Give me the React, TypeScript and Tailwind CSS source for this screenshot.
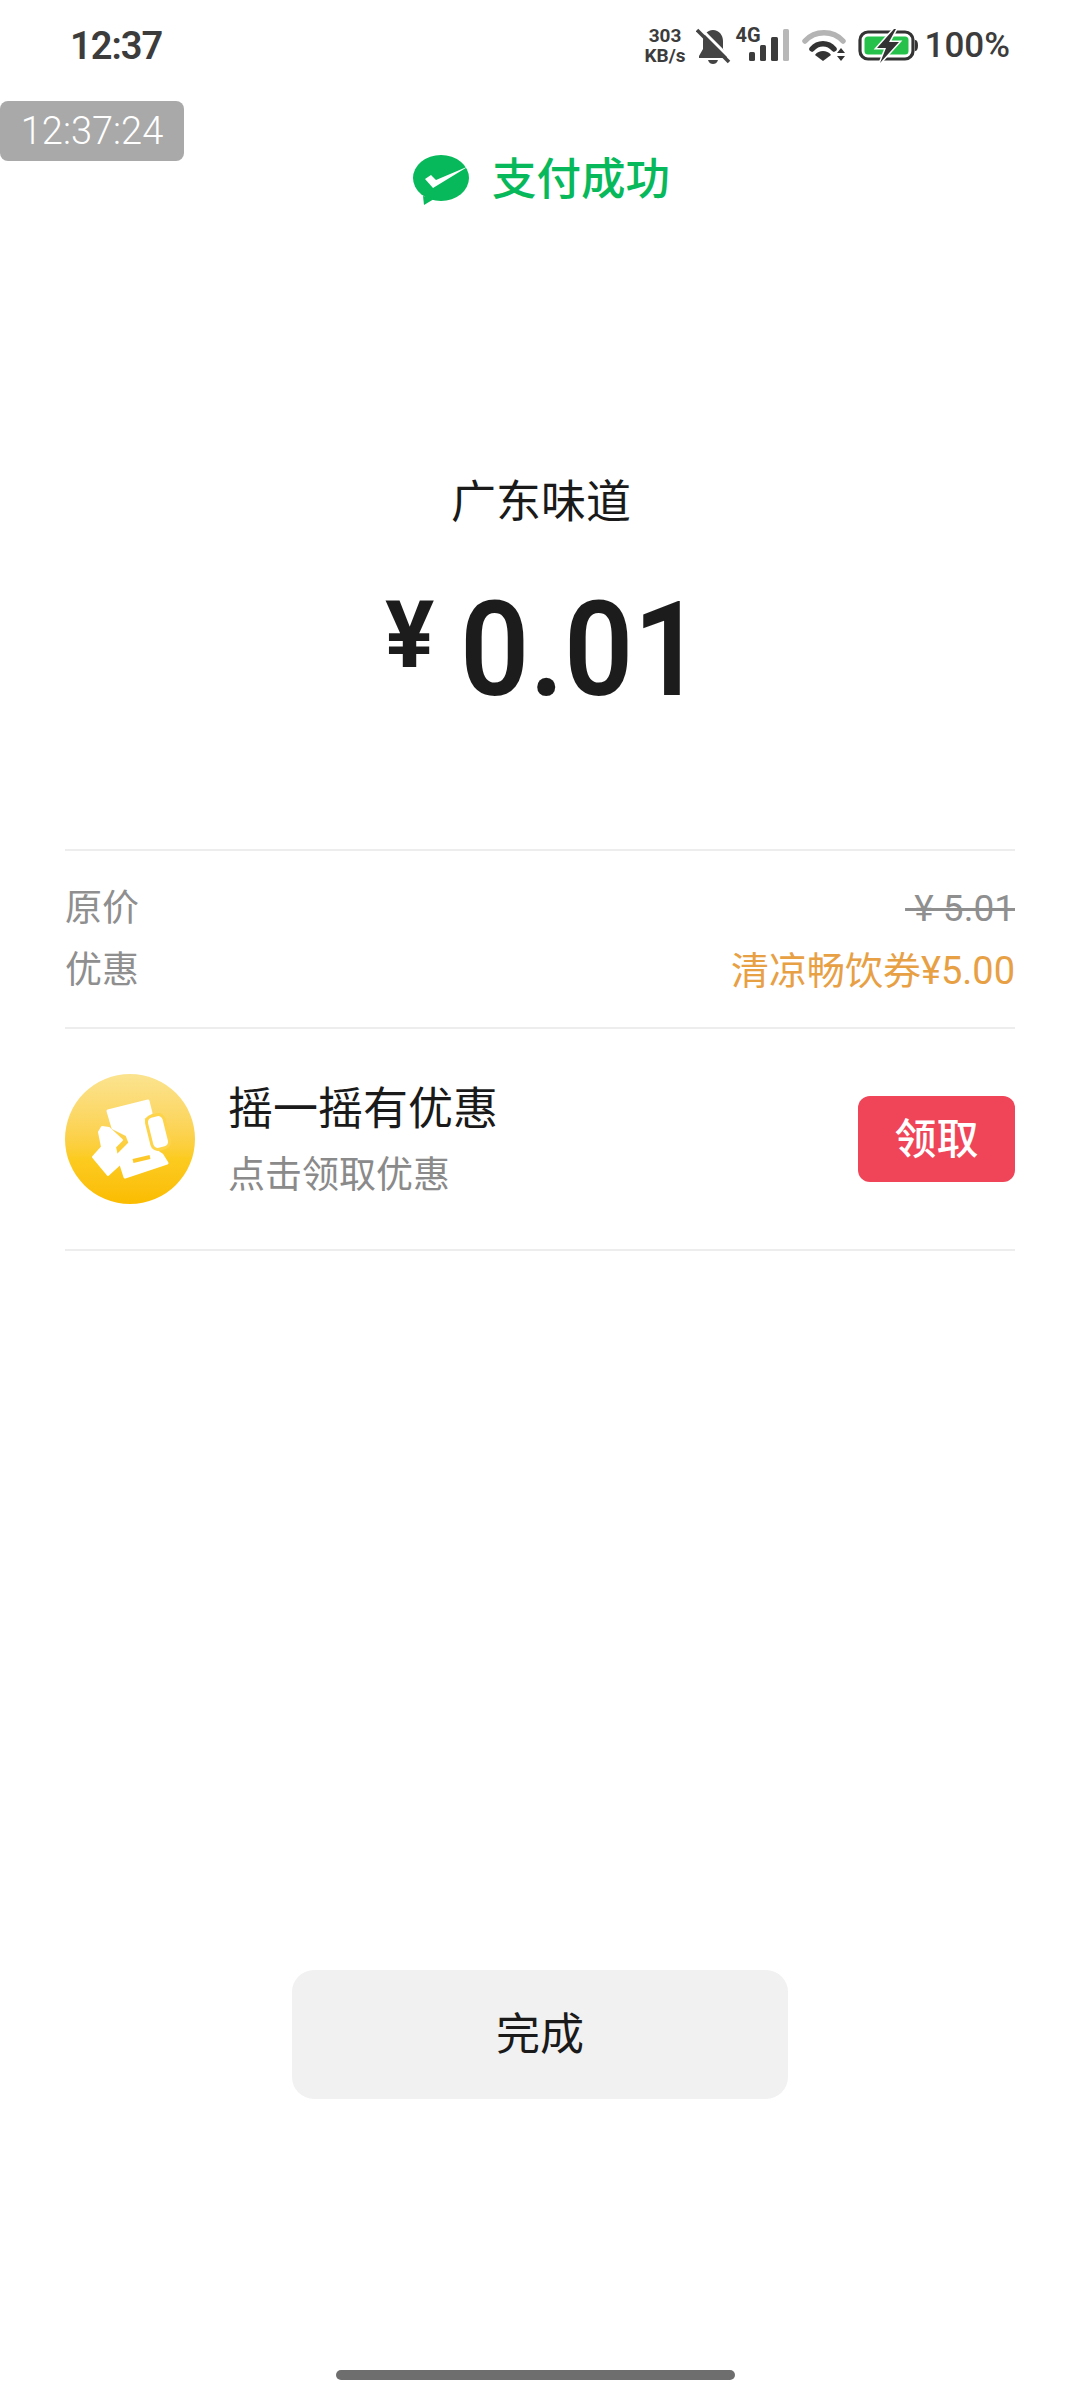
const fontStack = { fontFamily: '"Roboto", "Noto Sans CJK SC", sans-serif' };

const BellOff = () => (
    <svg width="35" height="38" viewBox="0 0 35 38" className="ml-[10px]">
        <path d="M17 3c6 0 10 5 10 11v8l4 7v2H3v-2l4-7v-8C7 8 11 3 17 3z" fill="#444" />
        <path d="M12 33h10c-1 3-3 4-5 4s-4-1-5-4z" fill="#444" />
        <line x1="3" y1="0" x2="36" y2="33" stroke="#fff" strokeWidth="3" />
        <line x1="1" y1="3" x2="33" y2="35" stroke="#444" strokeWidth="3.5" />
    </svg>
);

const Signal = () => (
    <div className="relative ml-[3px] w-[56px] h-[36px]">
        <span className="absolute left-[2px] top-[-3px] text-[20px] leading-[20px] font-bold text-[#3c3c3c]">4G</span>
        <svg width="41" height="33" viewBox="0 0 41 33" className="absolute left-[15px] top-[1px]">
            <rect x="0" y="23" width="6" height="9" rx="1.5" fill="#3c3c3c" />
            <rect x="11" y="16" width="6" height="16" rx="1.5" fill="#3c3c3c" />
            <rect x="22" y="8" width="7" height="24" rx="1.5" fill="#3c3c3c" />
            <rect x="34" y="0" width="6" height="32" rx="1.5" fill="#b8b8b8" />
        </svg>
    </div>
);

const Wifi = () => (
    <svg width="44" height="32" viewBox="0 0 44 32" className="ml-[12px]">
        <path d="M3 11C13 0 31 0 41 11" fill="none" stroke="#b4b4b4" strokeWidth="5.5" strokeLinecap="round" />
        <path d="M10 19C16 12 26 12 32 19" fill="none" stroke="#333" strokeWidth="5.5" strokeLinecap="round" />
        <path d="M21 21c3 0 6 1 8 4l-8 6-8-6c2-3 5-4 8-4z" fill="#333" />
        <path d="M35 23l4-5 4 5zM35 26l4 5 4-5z" fill="#333" />
    </svg>
);

const Battery = () => (
    <svg width="60" height="34" viewBox="0 0 60 34" className="ml-[12px]">
        <rect x="2" y="3" width="53" height="27" rx="8" fill="none" stroke="#333" strokeWidth="3.2" />
        <path d="M57 11c2 0 3 2 3 5.500s-1 5.500-3 5.500z" fill="#333" />
        <rect x="6.500" y="7.500" width="44" height="18" rx="3.500" fill="#25c14b" />
        <path
            d="M36 0L19 19h9l-6 15 19-21h-10l7-13z"
            fill="#333"
            stroke="#fff"
            strokeWidth="3"
            paintOrder="stroke"
        />
    </svg>
);

const WechatMark = () => (
    <svg width="56" height="50" viewBox="0 0 56 50">
        <ellipse cx="28" cy="23" rx="28" ry="23" fill="#07b95a" />
        <path d="M10 41l1 9 10-6z" fill="#07b95a" />
        <path d="M12 24l6-4 5 5 33-14-36 22z" fill="#fff" />
    </svg>
);

const CouponMark = () => (
    <div className="w-[130px] h-[130px] rounded-full bg-gradient-to-b from-[#fbe38f] via-[#fccb1f] via-65% to-[#fbbc00] flex items-center justify-center shrink-0">
        <svg width="130" height="130" viewBox="0 0 130 130">
            <path
                d="M43 37L83 27L86 39L78 44L85 73L97 81L102 89L60 103L53 81L65 69L62 61L48 54z"
                fill="#fff"
                stroke="#fff"
                strokeWidth="3"
                strokeLinejoin="round"
            />
            <path
                d="M37 53L44 54L57 66L50 73L54 91L43 101L28 83L37 73L34 58z"
                fill="#fff"
                stroke="#fff"
                strokeWidth="2"
                strokeLinejoin="round"
            />
            <rect
                x="84"
                y="41"
                width="18"
                height="34"
                rx="6"
                fill="#fff"
                stroke="#fdd44a"
                strokeWidth="3"
                transform="rotate(-14 93 58)"
            />
            <line x1="68" y1="87" x2="85" y2="83" stroke="#fdc92a" strokeWidth="4" />
        </svg>
    </div>
);

const App = () => {
    return (
        <div className="w-[1080px] h-[2400px] bg-white flex flex-col relative" style={fontStack}>
            <div className="h-[92px] flex items-center justify-between pl-[70px] pr-[70px] text-[#3c3c3c]">
                <span className="text-[38px] leading-[46px] font-semibold tracking-[-1px]">12:37</span>
                <div className="flex items-center">
                    <div className="flex flex-col items-center text-[19px] leading-[20px] font-bold">
                        <span>303</span>
                        <span>KB/s</span>
                    </div>
                    <BellOff />
                    <Signal />
                    <Wifi />
                    <Battery />
                    <span className="ml-[7px] text-[35px] leading-[40px] font-medium">100%</span>
                </div>
            </div>

            <div className="absolute left-0 top-[101px] w-[184px] h-[60px] bg-[#a9a9a9] rounded-[8px] flex items-center justify-center text-white text-[38px] font-light">
                12:37:24
            </div>

            <div className="mt-[62px] ml-[413px] flex items-center gap-[23px]">
                <WechatMark />
                <span className="text-[44.5px] leading-[52px] font-medium text-[#07b95a]">支付成功</span>
            </div>

            <div className="mt-[269px] text-center pl-[2px] text-[45px] leading-[56px] text-[#1a1a1a]">广东味道</div>

            <div className="mt-[51px] ml-[385px] flex items-start text-[#1c1c1c] h-[136px]">
                <span className="text-[92px] leading-[100px] font-bold mt-[4px]">¥</span>
                <span className="ml-[26px] text-[132px] leading-[136px] font-semibold scale-x-[0.92] origin-left">0.01</span>
            </div>

            <div className="mt-[131px] mx-[65px] border-t-2 border-[#ededed]">
                <div className="pt-[35px] pb-[33px] flex flex-col gap-[16px] text-[37px] leading-[46px] text-[#8f8f8f]">
                    <div className="flex justify-between">
                        <span>原价</span>
                        <span className="line-through">&nbsp;¥ 5.01</span>
                    </div>
                    <div className="flex justify-between">
                        <span>优惠</span>
                        <span className="text-[38px] text-[#e8a045]">清凉畅饮券¥5.00</span>
                    </div>
                </div>
                <div className="border-t-2 border-[#ededed] border-b-2 h-[224px] flex items-center">
                    <CouponMark />
                    <div className="ml-[33px] pt-[3px] flex flex-col gap-[15px]">
                        <span className="text-[45px] leading-[56px] text-[#1a1a1a]">摇一摇有优惠</span>
                        <span className="text-[37px] leading-[46px] text-[#8a8a8a]">点击领取优惠</span>
                    </div>
                    <button className="ml-auto w-[157px] h-[86px] rounded-[12px] bg-[#f04558] text-white text-[42px] font-medium">
                        领取
                    </button>
                </div>
            </div>

            <button className="mt-[719px] ml-[292px] w-[496px] h-[129px] rounded-[22px] bg-[#f1f1f1] text-[44px] text-[#1a1a1a]">
                完成
            </button>

            <div className="mt-auto mb-[20px] ml-[336px] w-[399px] h-[10px] rounded-full bg-[#6e6e6e]" />
        </div>
    );
};

export default App;
